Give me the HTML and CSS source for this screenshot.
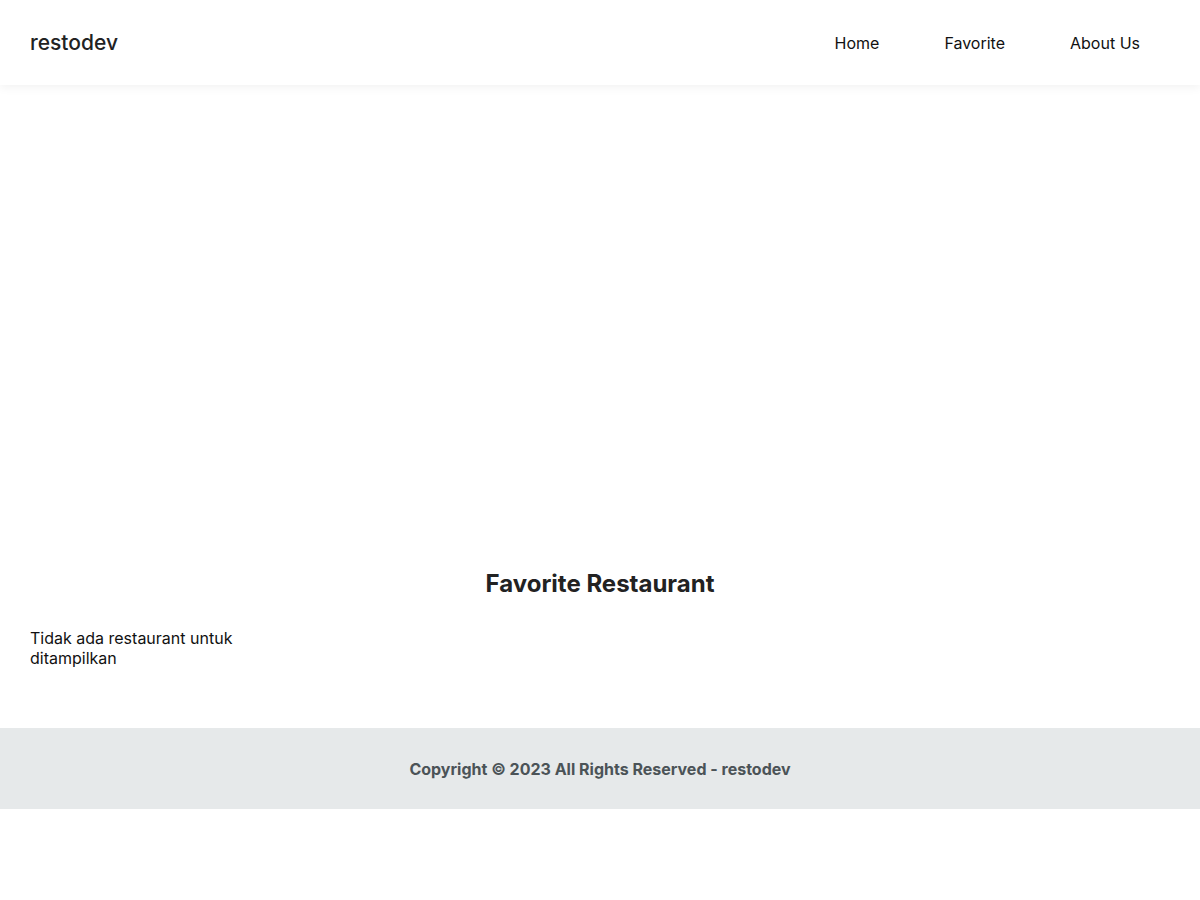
FILE: index.html
```html
<!DOCTYPE html>
<html lang="id">
<head>
<meta charset="utf-8">
<title>restodev</title>
<link rel="stylesheet" href="styles.css">
</head>
<body>
<header class="app-bar">
  <a class="brand" href="#">restodev</a>
  <nav class="nav">
    <a href="#">Home</a>
    <a href="#">Favorite</a>
    <a href="#">About Us</a>
  </nav>
</header>
<main class="main">
  <div class="hero"></div>
  <section class="content">
    <h2 class="content-title">Favorite Restaurant</h2>
    <div class="restaurants">
      <p class="empty">Tidak ada restaurant untuk ditampilkan</p>
    </div>
  </section>
</main>
<footer class="footer">
  <p>Copyright © 2023 All Rights Reserved - restodev</p>
</footer>
</body>
</html>
```
FILE: styles.css
```css
* { box-sizing: border-box; }
html, body { margin: 0; padding: 0; background: #fff; }
body {
  font-family: Inter, "Noto Sans", sans-serif;
  color: #222;
}
a { text-decoration: none; color: inherit; }

.app-bar {
  height: 85px;
  display: flex;
  align-items: center;
  justify-content: space-between;
  padding: 0 60px 0 30px;
  background: #fff;
  box-shadow: 0 2px 10px rgba(0, 0, 0, 0.06);
  position: relative;
  z-index: 1;
}
.brand {
  font-size: 21px;
  font-weight: 500;
  color: #222;
}
.nav {
  display: flex;
  gap: 65px;
}
.nav a {
  font-size: 16px;
  color: #111;
}

.hero { height: 460px; }

.content { padding: 0 30px 60px; }
.content-title {
  margin: 24px 0 30px;
  text-align: center;
  font-size: 24px;
  line-height: 29px;
  font-weight: 700;
  color: #222;
}
.restaurants {
  display: grid;
  grid-template-columns: 230px;
}
.empty {
  margin: 0;
  font-size: 16px;
  line-height: 20px;
  color: #111;
}

.footer {
  height: 81px;
  display: flex;
  align-items: center;
  justify-content: center;
  background: #e6e9ea;
}
.footer p {
  margin: 0;
  font-size: 16px;
  font-weight: 700;
  color: #4b5357;
}
```
